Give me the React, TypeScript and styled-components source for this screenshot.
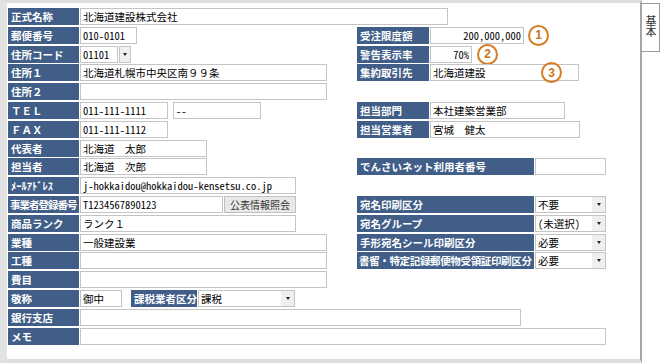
import React from 'react';
import styled, { createGlobalStyle } from 'styled-components';

const GlobalStyle = createGlobalStyle`
  html, body {
    margin: 0;
    padding: 0;
    background: #ffffff;
  }
  body {
    font-family: "Noto Sans CJK JP", "Liberation Sans", sans-serif;
  }
`;

const VALUE_FONT = `"Noto Sans Mono CJK JP", "Noto Sans CJK JP", monospace`;

const Screen = styled.div`
  display: flex;
  width: 661px;
  height: 363px;
  background: #ffffff;
`;

const Panel = styled.div`
  box-sizing: border-box;
  flex: none;
  width: 642px;
  height: 363px;
  border-top: 3px solid #dedede;
  border-left: 7px solid #e2e2e2;
  border-bottom: 4px solid #dedede;
  border-right: 2px solid #a6a6a6;
  padding: 5px 0 0 1px;
  display: flex;
  flex-direction: column;
  gap: 1.8px;
`;

const TabRail = styled.div`
  flex: none;
  width: 19px;
  padding-top: 3px;
`;

const Tab = styled.div`
  box-sizing: border-box;
  margin-left: -2px;
  width: 20px;
  height: 49px;
  background: #ffffff;
  border: 1px solid #9a9a9a;
  border-left: 2px solid #a6a6a6;
  writing-mode: vertical-rl;
  font-size: 11px;
  line-height: 17px;
  color: #333333;
  padding-top: 11px;
`;

const Row = styled.div`
  display: flex;
  height: 17px;
`;

const LeftCell = styled.div`
  display: flex;
  flex: 0 0 349px;
  gap: 1px;
`;

const RightCell = styled.div`
  position: relative;
  display: flex;
  gap: 1px;
`;

const Label = styled.div<{ $w?: number; $squeeze?: number; $gapLeft?: number }>`
  box-sizing: border-box;
  flex: none;
  width: ${p => p.$w ?? 71}px;
  height: 17px;
  margin-left: ${p => p.$gapLeft ?? 0}px;
  padding-left: ${p => (p.$squeeze ? 2 : 3)}px;
  background: #405e88;
  color: #ffffff;
  font-size: 10.5px;
  font-weight: bold;
  line-height: 17px;
  white-space: nowrap;
  overflow: hidden;
  letter-spacing: ${p => -(p.$squeeze ?? 0)}px;
`;

const Field = styled.div<{ $w: number; $right?: boolean; $gapLeft?: number }>`
  box-sizing: border-box;
  flex: none;
  width: ${p => p.$w}px;
  height: 17px;
  margin-left: ${p => p.$gapLeft ?? 0}px;
  padding: 0 2px;
  border: 1px solid #c4c4c4;
  background: #ffffff;
  color: #000000;
  font-family: ${VALUE_FONT};
  font-size: 10.5px;
  line-height: 15px;
  text-align: ${p => (p.$right ? 'right' : 'left')};
  white-space: nowrap;
  overflow: hidden;
`;

const Select = styled.div<{ $w: number }>`
  box-sizing: border-box;
  flex: none;
  display: flex;
  width: ${p => p.$w}px;
  height: 17px;
  border: 1px solid #c4c4c4;
  background: #ffffff;
`;

const SelectText = styled.div`
  flex: 1;
  padding: 0 2px;
  color: #000000;
  font-family: ${VALUE_FONT};
  font-size: 10.5px;
  line-height: 15px;
  white-space: nowrap;
`;

const Arrow = styled.div<{ $boxed?: boolean }>`
  box-sizing: border-box;
  flex: none;
  width: ${p => (p.$boxed ? 12 : 13)}px;
  height: ${p => (p.$boxed ? 17 : 15)}px;
  display: flex;
  align-items: center;
  justify-content: center;
  background: #efefef;
  border: ${p => (p.$boxed ? '1px solid #c4c4c4' : 'none')};

  &::after {
    content: '';
    border-left: 2.5px solid transparent;
    border-right: 2.5px solid transparent;
    border-top: 3px solid #222222;
  }
`;

const Button = styled.div`
  box-sizing: border-box;
  flex: none;
  width: 72px;
  height: 17px;
  border: 1px solid #c0c0c0;
  background: #e8e8e8;
  color: #333333;
  font-size: 10px;
  line-height: 15px;
  text-align: center;
`;

const Marker = styled.span<{ $float?: boolean; $gapLeft?: number }>`
  box-sizing: border-box;
  flex: none;
  width: 21px;
  height: 21px;
  margin-top: -2px;
  margin-left: ${p => p.$gapLeft ?? 0}px;
  border: 2px solid #d47d24;
  border-radius: 50%;
  background: transparent;
  display: flex;
  align-items: center;
  justify-content: center;
  color: #cc7420;
  font-family: "Liberation Sans", sans-serif;
  font-size: 12px;
  font-weight: bold;
  ${p => (p.$float ? 'position: absolute; left: 184px; top: 0;' : '')}
`;

const Dropdown = ({ w, value }: { w: number; value: string }) => (
  <Select $w={w}>
    <SelectText>{value}</SelectText>
    <Arrow />
  </Select>
);

const App = () => (
  <>
    <GlobalStyle />
    <Screen>
      <Panel>
        <Row>
          <LeftCell>
            <Label>正式名称</Label>
            <Field $w={368}>北海道建設株式会社</Field>
          </LeftCell>
        </Row>
        <Row>
          <LeftCell>
            <Label>郵便番号</Label>
            <Field $w={57}>010-0101</Field>
          </LeftCell>
          <RightCell>
            <Label $w={72}>受注限度額</Label>
            <Field $w={94} $right>200,000,000</Field>
            <Marker $gapLeft={3}>1</Marker>
          </RightCell>
        </Row>
        <Row>
          <LeftCell>
            <Label>住所コード</Label>
            <Field $w={38}>01101</Field>
            <Arrow $boxed />
          </LeftCell>
          <RightCell>
            <Label $w={72}>警告表示率</Label>
            <Field $w={42} $right>70%</Field>
            <Marker $gapLeft={4}>2</Marker>
          </RightCell>
        </Row>
        <Row>
          <LeftCell>
            <Label>住所１</Label>
            <Field $w={247}>北海道札幌市中央区南９９条</Field>
          </LeftCell>
          <RightCell>
            <Label $w={72}>集約取引先</Label>
            <Field $w={149}>北海道建設</Field>
            <Marker $float>3</Marker>
          </RightCell>
        </Row>
        <Row>
          <LeftCell>
            <Label>住所２</Label>
            <Field $w={247} />
          </LeftCell>
        </Row>
        <Row>
          <LeftCell>
            <Label>ＴＥＬ</Label>
            <Field $w={88}>011-111-1111</Field>
            <Field $w={88} $gapLeft={4}>--</Field>
          </LeftCell>
          <RightCell>
            <Label $w={72}>担当部門</Label>
            <Field $w={135}>本社建築営業部</Field>
          </RightCell>
        </Row>
        <Row>
          <LeftCell>
            <Label>ＦＡＸ</Label>
            <Field $w={88}>011-111-1112</Field>
          </LeftCell>
          <RightCell>
            <Label $w={72}>担当営業者</Label>
            <Field $w={150}>宮城　健太</Field>
          </RightCell>
        </Row>
        <Row>
          <LeftCell>
            <Label>代表者</Label>
            <Field $w={127}>北海道　太郎</Field>
          </LeftCell>
        </Row>
        <Row>
          <LeftCell>
            <Label>担当者</Label>
            <Field $w={127}>北海道　次郎</Field>
          </LeftCell>
          <RightCell>
            <Label $w={177}>でんさいネット利用者番号</Label>
            <Field $w={71} />
          </RightCell>
        </Row>
        <Row>
          <LeftCell>
            <Label>ﾒｰﾙｱﾄﾞﾚｽ</Label>
            <Field $w={216}>j-hokkaidou@hokkaidou-kensetsu.co.jp</Field>
          </LeftCell>
        </Row>
        <Row>
          <LeftCell>
            <Label $squeeze={1}>事業者登録番号</Label>
            <Field $w={143}>T1234567890123</Field>
            <Button>公表情報照会</Button>
          </LeftCell>
          <RightCell>
            <Label $w={177}>宛名印刷区分</Label>
            <Dropdown w={71} value="不要" />
          </RightCell>
        </Row>
        <Row>
          <LeftCell>
            <Label>商品ランク</Label>
            <Field $w={216}>ランク１</Field>
          </LeftCell>
          <RightCell>
            <Label $w={177}>宛名グループ</Label>
            <Dropdown w={71} value="(未選択)" />
          </RightCell>
        </Row>
        <Row>
          <LeftCell>
            <Label>業種</Label>
            <Field $w={247}>一般建設業</Field>
          </LeftCell>
          <RightCell>
            <Label $w={177}>手形宛名シール印刷区分</Label>
            <Dropdown w={71} value="必要" />
          </RightCell>
        </Row>
        <Row>
          <LeftCell>
            <Label>工種</Label>
            <Field $w={247} />
          </LeftCell>
          <RightCell>
            <Label $w={177} $squeeze={0.35}>書留・特定記録郵便物受領証印刷区分</Label>
            <Dropdown w={71} value="必要" />
          </RightCell>
        </Row>
        <Row>
          <LeftCell>
            <Label>費目</Label>
            <Field $w={247} />
          </LeftCell>
        </Row>
        <Row>
          <LeftCell>
            <Label>敬称</Label>
            <Field $w={42}>御中</Field>
            <Label $w={66} $gapLeft={8}>課税業者区分</Label>
            <Dropdown w={97} value="課税" />
          </LeftCell>
        </Row>
        <Row>
          <LeftCell>
            <Label>銀行支店</Label>
            <Field $w={441} />
          </LeftCell>
        </Row>
        <Row>
          <LeftCell>
            <Label>メモ</Label>
            <Field $w={526} />
          </LeftCell>
        </Row>
      </Panel>
      <TabRail>
        <Tab>基本</Tab>
      </TabRail>
    </Screen>
  </>
);

export default App;
